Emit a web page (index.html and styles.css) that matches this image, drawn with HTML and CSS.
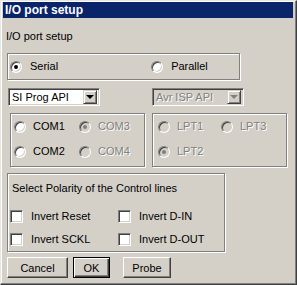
FILE: index.html
```html
<!DOCTYPE html>
<html>
<head>
<meta charset="utf-8">
<link rel="stylesheet" href="styles.css">
</head>
<body>
<div class="window">
  <div class="titlebar">I/O port setup</div>
  <div class="content">
    <div class="label">I/O port setup</div>
    <div class="group mode">
      <label class="opt serial"><span class="radio checked"></span><span>Serial</span></label>
      <label class="opt parallel"><span class="radio"></span><span>Parallel</span></label>
    </div>
    <div class="ports">
      <div class="col">
        <div class="select sel-si"><span class="val">SI Prog API</span><span class="drop"><span class="arrow"></span></span></div>
        <div class="group portbox">
          <div class="pgrid com">
            <label class="opt"><span class="radio"></span><span>COM1</span></label>
            <label class="opt dis"><span class="radio checked"></span><span>COM3</span></label>
            <label class="opt"><span class="radio"></span><span>COM2</span></label>
            <label class="opt dis"><span class="radio"></span><span>COM4</span></label>
          </div>
        </div>
      </div>
      <div class="col right">
        <div class="select sel-avr dis"><span class="val">Avr ISP API</span><span class="drop"><span class="arrow"></span></span></div>
        <div class="group portbox">
          <div class="pgrid lpt">
            <label class="opt dis"><span class="radio"></span><span>LPT1</span></label>
            <label class="opt dis"><span class="radio"></span><span>LPT3</span></label>
            <label class="opt dis"><span class="radio checked"></span><span>LPT2</span></label>
          </div>
        </div>
      </div>
    </div>
    <div class="group polarity">
      <div class="ptitle">Select Polarity of the Control lines</div>
      <div class="cgrid">
        <label class="opt"><span class="check"></span><span>Invert Reset</span></label>
        <label class="opt"><span class="check"></span><span>Invert D-IN</span></label>
        <label class="opt"><span class="check"></span><span>Invert SCKL</span></label>
        <label class="opt"><span class="check"></span><span>Invert D-OUT</span></label>
      </div>
    </div>
    <div class="buttons">
      <button class="btn cancel">Cancel</button>
      <button class="btn ok">OK</button>
      <button class="btn probe">Probe</button>
    </div>
  </div>
</div>
</body>
</html>
```

FILE: styles.css
```css
* { box-sizing: border-box; }
html, body {
  margin: 0;
  padding: 0;
  background: #d4d0c8;
}
body {
  font-family: "Liberation Sans", Arial, sans-serif;
  font-size: 11px;
  color: #000;
  width: 297px;
  height: 285px;
  overflow: hidden;
}
.window {
  width: 297px;
  height: 285px;
  background: #d4d0c8;
  border-top: 1px solid #e8e6e0;
  border-left: 1px solid #e8e6e0;
  border-right: 1px solid #404040;
  border-bottom: 1px solid #404040;
  box-shadow: inset -1px -1px #808080, inset 1px 1px #fff;
  padding: 1px 3px 0 1px;
}
.titlebar {
  height: 16px;
  margin-left: 1px;
  background: #0a246a;
  color: #fff;
  font-weight: bold;
  font-size: 12px;
  line-height: 16px;
  padding-left: 2px;
}
.content {
  padding-left: 5px;
}
.label {
  margin-top: 12px;
  line-height: 13px;
  height: 13px;
  margin-left: -1px;
}
.group {
  border: 1px solid #808080;
  box-shadow: inset 1px 1px #fff, 1px 1px #fff;
}
.mode {
  margin-top: 10px;
  width: 233px;
  height: 27px;
  display: flex;
  align-items: center;
}
.opt {
  display: flex;
  align-items: center;
  white-space: nowrap;
  line-height: 13px;
}
.radio {
  width: 12px;
  height: 12px;
  border-radius: 50%;
  background: #fff;
  flex: none;
  position: relative;
  border: 1px solid;
  border-color: #808080 #fff #fff #808080;
  box-shadow: inset 1px 1px #404040, inset -1px -1px #d4d0c8;
}
.radio.checked::after {
  content: "";
  position: absolute;
  left: 3px;
  top: 3px;
  width: 4px;
  height: 4px;
  border-radius: 50%;
  background: #000;
}
.dis .radio { background: #d4d0c8; }
.dis .radio.checked::after { background: #808080; }
.dis span:last-child, .dis .val {
  color: #808080;
  text-shadow: 1px 1px #fff;
}
.serial { margin-left: 2px; }
.serial .radio { margin-right: 8px; }
.parallel { margin-left: 93px; }
.parallel .radio { margin-right: 8px; }
.ports {
  margin-top: 8px;
  display: flex;
}
.col { display: flex; flex-direction: column; }
.col.right { margin-left: 6px; }
.select {
  height: 18px;
  width: 92px;
  margin-left: 1px;
  background: #fff;
  border: 1px solid;
  border-color: #808080 #fff #fff #808080;
  box-shadow: inset 1px 1px #404040, inset -1px -1px #d4d0c8;
  display: flex;
  align-items: center;
  padding: 2px 2px 2px 3px;
}
.select.dis { background: #d4d0c8; }
.val { flex: 1; line-height: 13px; }
.drop {
  width: 14px;
  height: 14px;
  background: #d4d0c8;
  border: 1px solid;
  border-color: #d4d0c8 #404040 #404040 #d4d0c8;
  box-shadow: inset 1px 1px #fff, inset -1px -1px #808080;
  display: flex;
  align-items: center;
  justify-content: center;
}
.arrow {
  width: 0;
  height: 0;
  border-left: 4px solid transparent;
  border-right: 4px solid transparent;
  border-top: 4px solid #000;
}
.dis .arrow { border-top-color: #808080; }
.sel-avr { width: 92px; }
.portbox {
  margin-top: 7px;
  margin-left: 3px;
  width: 135px;
  height: 54px;
  padding: 6px 0 0 3px;
}
.right .portbox { margin-left: 1px; }
.pgrid {
  display: grid;
  grid-template-columns: 65px auto;
  row-gap: 12px;
}
.pgrid .radio { margin-right: 7px; }
.lpt { grid-template-columns: 65px auto; }
.lpt .opt:first-child { margin-left: 2px; }
.lpt .opt:nth-child(3) { margin-left: 2px; }
.polarity {
  margin-top: 6px;
  width: 218px;
  height: 79px;
  padding: 8px 0 0 4px;
}
.ptitle { line-height: 13px; }
.cgrid {
  margin-top: 15px;
  margin-left: -2px;
  display: grid;
  grid-template-columns: 108px auto;
  row-gap: 10px;
}
.check {
  width: 13px;
  height: 13px;
  background: #fff;
  flex: none;
  border: 1px solid;
  border-color: #808080 #fff #fff #808080;
  box-shadow: inset 1px 1px #404040, inset -1px -1px #d4d0c8;
  margin-right: 8px;
}
.buttons {
  margin-top: 5px;
  display: flex;
}
.btn {
  font-family: "Liberation Sans", Arial, sans-serif;
  font-size: 11px;
  height: 21px;
  padding: 0;
  background: #d4d0c8;
  color: #000;
  border: 1px solid;
  border-color: #fff #404040 #404040 #fff;
  box-shadow: inset -1px -1px #808080;
}
.cancel { width: 61px; }
.ok {
  width: 37px;
  margin-left: 5px;
  border: 1px solid #000;
  box-shadow: inset 1px 1px #fff, inset -1px -1px #404040, inset -2px -2px #808080;
}
.probe { width: 48px; margin-left: 13px; }
```
